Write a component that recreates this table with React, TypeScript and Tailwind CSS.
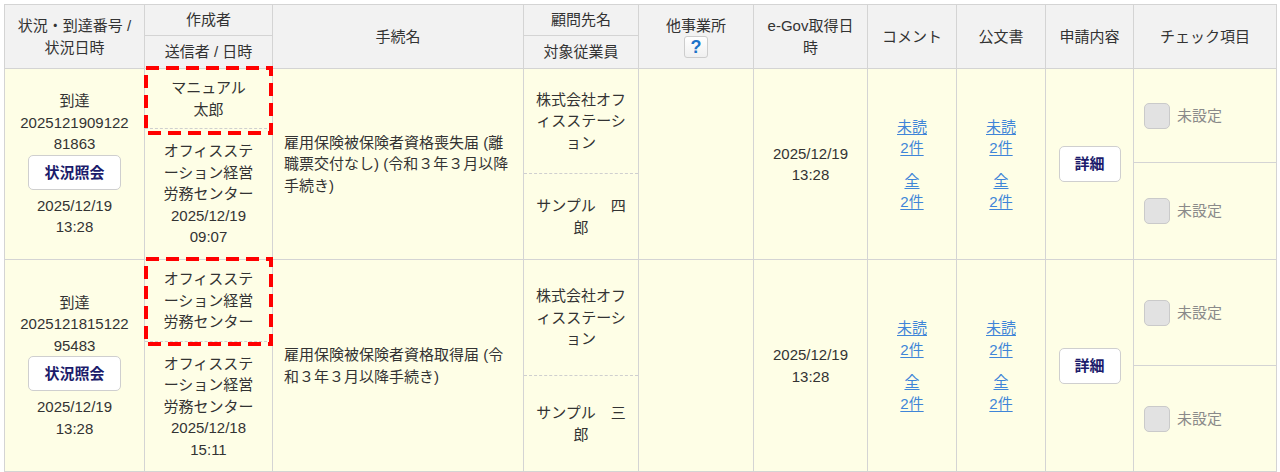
import React from 'react';

type RowData = {
  no: string[];
  date: string;
  time: string;
  creator: string[];
  creatorH: number;
  boxH: number;
  sender: string[];
  proc: string[];
  clientTopH: string;
  client: string[];
  emp: string[];
  checkTopH: string;
};

const rows: RowData[] = [
  {
    no: ['2025121909122', '81863'],
    date: '2025/12/19',
    time: '13:28',
    creator: ['マニュアル', '太郎'],
    creatorH: 60,
    boxH: 69,
    sender: ['オフィスステ', 'ーション経営', '労務センター', '2025/12/19', '09:07'],
    proc: ['雇用保険被保険者資格喪失届 (離', '職票交付なし) (令和３年３月以降', '手続き)'],
    clientTopH: 'h-[105px]',
    client: ['株式会社オフ', 'ィスステーシ', 'ョン'],
    emp: ['サンプル　四', '郎'],
    checkTopH: 'h-[94px]',
  },
  {
    no: ['2025121815122', '95483'],
    date: '2025/12/19',
    time: '13:28',
    creator: ['オフィスステ', 'ーション経営', '労務センター'],
    creatorH: 82,
    boxH: 89,
    sender: ['オフィスステ', 'ーション経営', '労務センター', '2025/12/18', '15:11'],
    proc: ['雇用保険被保険者資格取得届 (令', '和３年３月以降手続き)'],
    clientTopH: 'h-[116px]',
    client: ['株式会社オフ', 'ィスステーシ', 'ョン'],
    emp: ['サンプル　三', '郎'],
    checkTopH: 'h-[106px]',
  },
];

const Lines = ({ lines }: { lines: string[] }) => (
  <>
    {lines.map((l, i) => (
      <div key={i} className="whitespace-nowrap">
        {l}
      </div>
    ))}
  </>
);

const HeadCell = ({ children }: { children: React.ReactNode }) => (
  <div className="bg-[#f2f2f2] flex flex-col items-center justify-center text-center">{children}</div>
);

const HeadSplit = ({ top, bottom }: { top: string; bottom: string }) => (
  <div className="bg-[#f2f2f2] flex flex-col text-center">
    <div className="h-[31px] border-b border-[#d4d4d4] flex items-center justify-center">{top}</div>
    <div className="flex-1 flex items-center justify-center">{bottom}</div>
  </div>
);

const DashBox = ({ h }: { h: number }) => (
  <svg
    className="absolute left-[-1px] top-[-3px] z-10 pointer-events-none"
    width={129}
    height={h}
    viewBox={`0 0 129 ${h}`}
  >
    <rect x={2} y={2} width={125} height={h - 4} fill="none" stroke="#ff0000" strokeWidth={4} strokeDasharray="13 7" />
  </svg>
);

const Links = () => (
  <div className="flex flex-col items-center text-[#3f85d8] underline underline-offset-2">
    <div>未読</div>
    <div>2件</div>
    <div className="mt-[11px]">全</div>
    <div>2件</div>
  </div>
);

const Check = ({ className }: { className: string }) => (
  <div className={`flex items-center pl-[10px] gap-[7px] ${className}`}>
    <span className="w-[26px] h-[26px] rounded-[5px] bg-[#e2e2e2] border border-[#cacaca]" />
    <span className="text-[#8a8a8a]">未設定</span>
  </div>
);

const BodyRow = ({ r }: { r: RowData }) => {
  const cell = 'bg-[#fefee6]';
  return (
    <>
      <div className={`${cell} flex flex-col items-center justify-center text-center`}>
        <div>到達</div>
        <Lines lines={r.no} />
        <button className="w-[93px] h-[35px] bg-white border border-[#cfcfcf] rounded-[5px] font-bold text-[#1b1b6b] mb-[5px]">
          状況照会
        </button>
        <div>{r.date}</div>
        <div>{r.time}</div>
      </div>
      <div className={`${cell} relative flex flex-col text-center`}>
        <div className="flex flex-col items-center justify-center border-b border-dashed border-[#cfcfcf]" style={{ height: r.creatorH }}>
          <Lines lines={r.creator} />
        </div>
        <div className="flex-1 flex flex-col items-center justify-center">
          <Lines lines={r.sender} />
        </div>
        <DashBox h={r.boxH} />
      </div>
      <div className={`${cell} flex flex-col justify-center pl-[11px]`}>
        <Lines lines={r.proc} />
      </div>
      <div className={`${cell} flex flex-col text-center`}>
        <div className={`${r.clientTopH} flex flex-col items-center justify-center border-b border-dashed border-[#cfcfcf]`}>
          <Lines lines={r.client} />
        </div>
        <div className="flex-1 flex flex-col items-center justify-center">
          <Lines lines={r.emp} />
        </div>
      </div>
      <div className={cell} />
      <div className={`${cell} flex flex-col items-center justify-center`}>
        <div>{r.date}</div>
        <div>{r.time}</div>
      </div>
      <div className={`${cell} flex items-center justify-center`}>
        <Links />
      </div>
      <div className={`${cell} flex items-center justify-center`}>
        <Links />
      </div>
      <div className={`${cell} flex items-center justify-center`}>
        <button className="w-[62px] h-[36px] bg-white border border-[#cfcfcf] rounded-[5px] font-bold text-[#1b1b6b]">
          詳細
        </button>
      </div>
      <div className={`${cell} flex flex-col`}>
        <Check className={`${r.checkTopH} border-b border-[#d4d4d4]`} />
        <Check className="flex-1" />
      </div>
    </>
  );
};

export default function App() {
  return (
    <div
      className="bg-white p-1 text-[15px] leading-[21.5px] text-[#333]"
      style={{ fontFamily: '"Liberation Sans", Arial, "Noto Sans CJK JP", sans-serif' }}
    >
      <div className="grid w-fit grid-cols-[139px_127px_250px_114px_114px_113px_88px_88px_87px_142px] grid-rows-[63px_190px_211px] gap-px bg-[#d4d4d4] border border-[#d4d4d4]">
        <HeadCell>
          <div>状況・到達番号 /</div>
          <div>状況日時</div>
        </HeadCell>
        <HeadSplit top="作成者" bottom="送信者 / 日時" />
        <HeadCell>手続名</HeadCell>
        <HeadSplit top="顧問先名" bottom="対象従業員" />
        <HeadCell>
          <div>他事業所</div>
          <span className="w-[24px] h-[22px] flex items-center justify-center bg-gradient-to-b from-white to-[#f0f0f0] border border-[#cdcdcd] rounded-[3px] text-[#1c72c9] font-bold text-[18px] leading-none">
            ?
          </span>
        </HeadCell>
        <HeadCell>
          <div>e-Gov取得日</div>
          <div>時</div>
        </HeadCell>
        <HeadCell>コメント</HeadCell>
        <HeadCell>公文書</HeadCell>
        <HeadCell>申請内容</HeadCell>
        <HeadCell>チェック項目</HeadCell>
        {rows.map((r, i) => (
          <BodyRow key={i} r={r} />
        ))}
      </div>
    </div>
  );
}
